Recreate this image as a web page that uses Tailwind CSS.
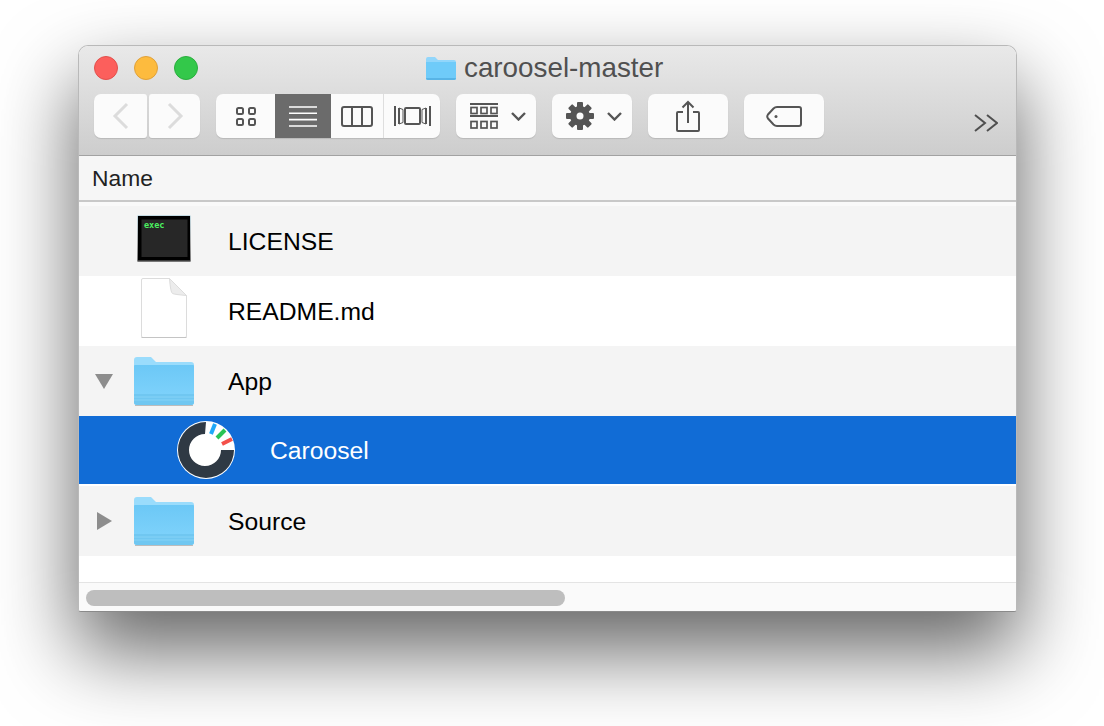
<!DOCTYPE html>
<html>
<head>
<meta charset="utf-8">
<script src="https://cdn.jsdelivr.net/npm/@tailwindcss/browser@4"></script>
</head>
<body class="bg-white overflow-hidden font-['Liberation_Sans',Arial,sans-serif]">
<div class="w-[1104px] h-[726px] pt-[45px] pl-[78px] overflow-hidden">
  <div class="w-[939px] h-[567px] flex flex-col rounded-t-[10px] rounded-b-[3px] border border-[#b9b9b9] border-b-[#8a8a8a] bg-white shadow-[0_38px_80px_2px_rgba(0,0,0,0.6)] overflow-hidden">
    <!-- title + toolbar -->
    <div class="h-[109px] shrink-0 bg-gradient-to-b from-[#e9e9e9] to-[#cdcdcd] border-b border-[#a2a2a2] box-content">
      <div class="flex items-center h-[44px] pl-[15px]">
        <div class="flex gap-[16px]">
          <span class="w-[24px] h-[24px] rounded-full bg-[#fc5f5c] border border-[#e2504c]"></span>
          <span class="w-[24px] h-[24px] rounded-full bg-[#fdbb3e] border border-[#e0a13a]"></span>
          <span class="w-[24px] h-[24px] rounded-full bg-[#33c84a] border border-[#2aae3e]"></span>
        </div>
        <svg class="ml-[227px]" width="32" height="24" viewBox="0 0 32 24">
          <path d="M1 3a2 2 0 0 1 2-2h7l3 3h16a2 2 0 0 1 2 2v16a2 2 0 0 1-2 2H3a2 2 0 0 1-2-2z" fill="#92d6fb"/>
          <path d="M1 6h30v16a2 2 0 0 1-2 2H3a2 2 0 0 1-2-2z" fill="#6fcbf9"/>
          <path d="M1 22h30a2 2 0 0 1-2 2H3a2 2 0 0 1-2-2z" fill="#58b4e6"/>
        </svg>
        <span class="ml-[7px] text-[27.800px] leading-none text-[#505050]">caroosel-master</span>
      </div>
      <div class="flex items-start h-[44px] mt-[4px] pl-[15px]">
        <div class="flex gap-[2px]">
          <div class="w-[53px] h-[44px] rounded-l-[7px] rounded-r-[3px] bg-[#fbfbfb] flex items-center justify-center shadow-[0_1px_1px_rgba(0,0,0,0.12)]">
            <svg width="18" height="28" viewBox="0 0 18 28" fill="none" stroke="#dcdcdc" stroke-width="3"><path d="M15 2 3 14l12 12"/></svg>
          </div>
          <div class="w-[51px] h-[44px] rounded-r-[7px] rounded-l-[3px] bg-[#fbfbfb] flex items-center justify-center shadow-[0_1px_1px_rgba(0,0,0,0.12)]">
            <svg width="18" height="28" viewBox="0 0 18 28" fill="none" stroke="#dcdcdc" stroke-width="3"><path d="m3 2 12 12L3 26"/></svg>
          </div>
        </div>
        <div class="ml-[16px] flex w-[224px] h-[44px] rounded-[7px] overflow-hidden bg-[#fbfbfb] shadow-[0_1px_1px_rgba(0,0,0,0.12)]">
          <div class="w-[59px] flex items-center justify-center">
            <svg width="22" height="21" viewBox="0 0 22 21" fill="none" stroke="#555" stroke-width="2"><rect x="2" y="2" width="6" height="6" rx="1.500"/><rect x="14" y="2" width="6" height="6" rx="1.500"/><rect x="2" y="13" width="6" height="6" rx="1.500"/><rect x="14" y="13" width="6" height="6" rx="1.500"/></svg>
          </div>
          <div class="w-[56px] bg-[#6b6b6b] flex items-center justify-center">
            <svg width="28" height="21" viewBox="0 0 28 21" stroke="#fff" stroke-width="1.600"><path d="M0 1h28M0 7.300h28M0 13.600h28M0 20h28"/></svg>
          </div>
          <div class="w-[53px] flex items-center justify-center border-r-[1.500px] border-[#dedede]">
            <svg width="32" height="21" viewBox="0 0 32 21" fill="none" stroke="#555" stroke-width="2"><rect x="1" y="1" width="30" height="19" rx="2"/><path d="M11 1v19M21 1v19"/></svg>
          </div>
          <div class="flex-1 flex items-center justify-center">
            <svg width="37" height="22" viewBox="0 0 37 22" fill="none" stroke="#555" stroke-width="2"><rect x="11" y="3" width="15" height="16" rx="1"/><path d="M1 1v20M5 3v16M36 1v20M32 3v16"/><path d="m5 3 4 1.500v13L5 19M32 3l-4 1.500v13l4 1.500" stroke-width="1"/></svg>
          </div>
        </div>
        <div class="ml-[16px] w-[80px] h-[44px] rounded-[7px] bg-[#fbfbfb] flex items-center pl-[14px] shadow-[0_1px_1px_rgba(0,0,0,0.12)]">
          <svg width="28" height="26" viewBox="0 0 28 26" fill="none" stroke="#555"><path d="M0 1h28M0 13h28" stroke-width="2"/><g stroke-width="1.700"><rect x="1" y="4.500" width="6" height="6"/><rect x="11" y="4.500" width="6" height="6"/><rect x="21" y="4.500" width="6" height="6"/><rect x="1" y="18.500" width="6" height="6.500"/><rect x="11" y="18.500" width="6" height="6.500"/><rect x="21" y="18.500" width="6" height="6.500"/></g></svg>
          <svg class="ml-[13px]" width="15" height="9" viewBox="0 0 15 9" fill="none" stroke="#555" stroke-width="2.400"><path d="m1 1 6.500 6.500L14 1"/></svg>
        </div>
        <div class="ml-[16px] w-[80px] h-[44px] rounded-[7px] bg-[#fbfbfb] flex items-center pl-[14px] shadow-[0_1px_1px_rgba(0,0,0,0.12)]">
          <svg width="28" height="28" viewBox="0 0 28 28">
            <g fill="#555">
              <rect x="11" y="0" width="6" height="28" rx="1"/>
              <rect x="11" y="0" width="6" height="28" rx="1" transform="rotate(45 14 14)"/>
              <rect x="11" y="0" width="6" height="28" rx="1" transform="rotate(90 14 14)"/>
              <rect x="11" y="0" width="6" height="28" rx="1" transform="rotate(135 14 14)"/>
              <circle cx="14" cy="14" r="10"/>
            </g>
            <circle cx="14" cy="14" r="3.500" fill="#fbfbfb"/>
          </svg>
          <svg class="ml-[13px]" width="15" height="9" viewBox="0 0 15 9" fill="none" stroke="#555" stroke-width="2.400"><path d="m1 1 6.500 6.500L14 1"/></svg>
        </div>
        <div class="ml-[16px] w-[80px] h-[44px] rounded-[7px] bg-[#fbfbfb] flex items-center justify-center shadow-[0_1px_1px_rgba(0,0,0,0.12)]">
          <svg width="24" height="32" viewBox="0 0 24 32" fill="none" stroke="#555" stroke-width="2"><path d="M7 12H2a1 1 0 0 0-1 1v17a1 1 0 0 0 1 1h20a1 1 0 0 0 1-1V13a1 1 0 0 0-1-1h-5"/><path d="M12 23V2M6.500 7.500 12 2l5.500 5.500"/></svg>
        </div>
        <div class="ml-[16px] w-[80px] h-[44px] rounded-[7px] bg-[#fbfbfb] flex items-center justify-center shadow-[0_1px_1px_rgba(0,0,0,0.12)]">
          <svg width="36" height="21" viewBox="0 0 36 21" fill="none" stroke="#555" stroke-width="2"><path d="M11 1h22a2 2 0 0 1 2 2v15a2 2 0 0 1-2 2H11q-2 0-3.500-1.500L2 12.500q-1.500-2 0-4l5.500-6Q9 1 11 1z"/><circle cx="10" cy="10.500" r="1.500" fill="#555" stroke="none"/></svg>
        </div>
        <svg class="ml-[150px] mt-[20px]" width="24" height="18" viewBox="0 0 24 18" fill="none" stroke="#4f4f4f" stroke-width="2"><path d="m1 1 10 8-10 8M13 1l10 8-10 8"/></svg>
      </div>
    </div>
    <!-- column header -->
    <div class="h-[44px] shrink-0 bg-[#f6f6f6] flex items-center pl-[13px] text-[22.800px] text-[#222]">Name</div>
    <div class="h-[6px] shrink-0 bg-[#f9f9f9] border-t-2 border-[#c8c8c8]"></div>
    <!-- rows -->
    <div class="h-[70px] shrink-0 bg-[#f4f4f4] flex items-center">
      <div class="w-[55px]"></div>
      <svg class="self-start mt-[6px]" width="60" height="52" viewBox="0 0 60 52">
        <defs><linearGradient id="edge" x1="0" y1="0" x2="0" y2="1"><stop offset="0" stop-color="#c6dce4"/><stop offset="0.6" stop-color="#a8a8a8"/><stop offset="1" stop-color="#777"/></linearGradient></defs>
        <rect x="3" y="3" width="54" height="47" rx="1.500" fill="url(#edge)"/>
        <rect x="4" y="4" width="52" height="44.500" fill="#000"/>
        <rect x="7.500" y="7.500" width="46" height="37.500" fill="#272727"/>
        <text x="10" y="15.500" font-family="'DejaVu Sans Mono',monospace" font-size="8.500" font-weight="bold" fill="#4cf060">exec</text>
      </svg>
      <span class="ml-[34px] pt-[2px] text-[24.700px] text-black">LICENSE</span>
    </div>
    <div class="h-[70px] shrink-0 bg-white flex items-center">
      <div class="w-[55px]"></div>
      <svg class="self-start mt-[1px]" width="60" height="63" viewBox="0 0 60 63">
        <path d="M9 1.500h26.500l17 17V59q0 1.500-1.500 1.500H9Q7.500 60.500 7.500 59V3Q7.500 1.500 9 1.500z" fill="#fff" stroke="#dcdcdc"/>
        <path d="M7.500 60.500h45" stroke="#c4c4c4"/>
        <path d="M35.500 1.500q1 14 3 15t14 2z" fill="#ececec" stroke="#dcdcdc"/>
      </svg>
      <span class="ml-[34px] pt-[2px] text-[24.700px] text-black">README.md</span>
    </div>
    <div class="h-[70px] shrink-0 bg-[#f4f4f4] flex items-center">
      <div class="w-[55px] pl-[16px]">
        <svg width="18" height="15" viewBox="0 0 18 15"><path d="M0 0h18L9 15z" fill="#8d8d8d"/></svg>
      </div>
      <svg width="60" height="50" viewBox="0 0 60 50">
        <defs><linearGradient id="front" x1="0" y1="0" x2="0" y2="1"><stop offset="0" stop-color="#6cc8f6"/><stop offset="1" stop-color="#82d4fc"/></linearGradient></defs>
        <path d="M0 4a3 3 0 0 1 3-3h14l5 5h35a3 3 0 0 1 3 3v37a3 3 0 0 1-3 3H3a3 3 0 0 1-3-3z" fill="#9adcfc"/>
        <path d="M0 10a1 1 0 0 1 1-1h58a1 1 0 0 1 1 1v36a3 3 0 0 1-3 3H3a3 3 0 0 1-3-3z" fill="url(#front)"/>
        <path d="M0 38h60v8a3 3 0 0 1-3 3H3a3 3 0 0 1-3-3z" fill="#70c7f1"/>
        <path d="M0 41h60M0 44h60" stroke="#85d3f7" stroke-width="1"/>
        <path d="M1 49.500h58" stroke="#bcbcbc"/>
      </svg>
      <span class="ml-[34px] pt-[2px] text-[24.700px] text-black">App</span>
    </div>
    <div class="h-[68px] shrink-0 bg-[#116cd6] flex items-center">
      <div class="w-[97px]"></div>
      <svg width="60" height="60" viewBox="0 0 60 60">
        <circle cx="30" cy="30" r="29" fill="#fff"/>
        <path d="M30 2A28 28 0 1 0 58 30H45A16 16 0 1 1 29 14z" fill="#2f3944"/>
        <path d="M35 14l4-10" stroke="#1fa8f8" stroke-width="4"/>
        <path d="M41 18l8-8" stroke="#2bc455" stroke-width="4"/>
        <path d="M46 24l10-5" stroke="#f4504a" stroke-width="4"/>
      </svg>
      <span class="ml-[34px] pt-[2px] text-[24.700px] text-white">Caroosel</span>
    </div>
    <div class="h-[2px] shrink-0 bg-white"></div>
    <div class="h-[70px] shrink-0 bg-[#f4f4f4] flex items-center">
      <div class="w-[55px] pl-[18px]">
        <svg width="15" height="18" viewBox="0 0 15 18"><path d="M0 0l15 9L0 18z" fill="#8d8d8d"/></svg>
      </div>
      <svg width="60" height="50" viewBox="0 0 60 50">
        <path d="M0 4a3 3 0 0 1 3-3h14l5 5h35a3 3 0 0 1 3 3v37a3 3 0 0 1-3 3H3a3 3 0 0 1-3-3z" fill="#9adcfc"/>
        <path d="M0 10a1 1 0 0 1 1-1h58a1 1 0 0 1 1 1v36a3 3 0 0 1-3 3H3a3 3 0 0 1-3-3z" fill="url(#front)"/>
        <path d="M0 38h60v8a3 3 0 0 1-3 3H3a3 3 0 0 1-3-3z" fill="#70c7f1"/>
        <path d="M0 41h60M0 44h60" stroke="#85d3f7" stroke-width="1"/>
        <path d="M1 49.500h58" stroke="#bcbcbc"/>
      </svg>
      <span class="ml-[34px] pt-[2px] text-[24.700px] text-black">Source</span>
    </div>
    <div class="flex-1 bg-white"></div>
    <div class="h-[29px] shrink-0 bg-[#fafafa] border-t border-[#e4e4e4] pt-[7px] pl-[7px]">
      <div class="w-[479px] h-[16px] rounded-full bg-[#bebebe]"></div>
    </div>
  </div>
</div>
</body>
</html>
